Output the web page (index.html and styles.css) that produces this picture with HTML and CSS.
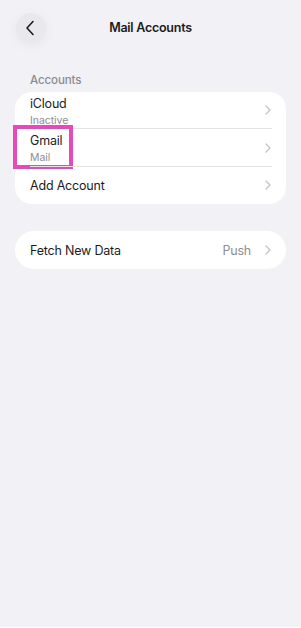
FILE: index.html
```html
<!DOCTYPE html>
<html>
<head>
<meta charset="utf-8">
<link rel="stylesheet" href="styles.css">
</head>
<body>
<div class="screen">
  <header class="nav">
    <button class="back" aria-label="Back">
      <svg width="10" height="16" viewBox="0 0 10 16"><path d="M8 1.5 L2 8 L8 14.5" fill="none" stroke="#1c1c1e" stroke-width="1.6" stroke-linecap="round" stroke-linejoin="round"/></svg>
    </button>
    <h1 class="title">Mail Accounts</h1>
  </header>

  <div class="section-label">Accounts</div>
  <div class="card">
    <div class="row two">
      <div class="texts"><div class="main">iCloud</div><div class="sub">Inactive</div></div>
      <span class="chev"><svg width="6" height="10" viewBox="0 0 6 10"><path d="M1 1 L5 5 L1 9" fill="none" stroke="#c4c4c8" stroke-width="1.3" stroke-linecap="round" stroke-linejoin="round"/></svg></span>
    </div>
    <div class="row two sel">
      <div class="texts"><div class="main">Gmail</div><div class="sub">Mail</div></div>
      <span class="chev"><svg width="6" height="10" viewBox="0 0 6 10"><path d="M1 1 L5 5 L1 9" fill="none" stroke="#c4c4c8" stroke-width="1.3" stroke-linecap="round" stroke-linejoin="round"/></svg></span>
      <span class="highlight"></span>
    </div>
    <div class="row one">
      <div class="texts"><div class="main">Add Account</div></div>
      <span class="chev"><svg width="6" height="10" viewBox="0 0 6 10"><path d="M1 1 L5 5 L1 9" fill="none" stroke="#c4c4c8" stroke-width="1.3" stroke-linecap="round" stroke-linejoin="round"/></svg></span>
    </div>
  </div>

  <div class="card pill">
    <div class="row one">
      <div class="texts"><div class="main">Fetch New Data</div></div>
      <span class="value">Push</span>
      <span class="chev"><svg width="6" height="10" viewBox="0 0 6 10"><path d="M1 1 L5 5 L1 9" fill="none" stroke="#c4c4c8" stroke-width="1.3" stroke-linecap="round" stroke-linejoin="round"/></svg></span>
    </div>
  </div>
</div>
</body>
</html>
```

FILE: styles.css
```css
html, body {
  margin: 0;
  padding: 0;
  background: #f2f1f6;
}
body {
  font-family: Inter, "Noto Sans", sans-serif;
  color: #1c1c1e;
  -webkit-font-smoothing: antialiased;
}
.screen {
  width: 301px;
  height: 627px;
  background: #f2f1f6;
  border-bottom: 1px solid #ffffff;
}
.nav {
  position: relative;
  height: 57px;
  display: flex;
  align-items: flex-start;
  justify-content: center;
}
.back {
  position: absolute;
  left: 16px;
  top: 13px;
  width: 30px;
  height: 30px;
  border-radius: 50%;
  border: none;
  padding: 0;
  background: #e9e8ed;
  box-shadow: 0 3px 12px rgba(0, 0, 0, 0.05);
  display: flex;
  align-items: center;
  justify-content: center;
}
.back svg { margin-left: -2px; }
.title {
  margin: 20px 0 0;
  font-size: 12.5px;
  line-height: 16px;
  font-weight: 600;
  letter-spacing: -0.25px;
}
.section-label {
  margin: 16px 0 0 30px;
  font-size: 11.5px;
  line-height: 15px;
  color: #8a8a8f;
  font-weight: 500;
  letter-spacing: -0.1px;
}
.card {
  margin: 4px 15px 0;
  background: #fff;
  border-radius: 17px;
}
.card.pill {
  margin-top: 27px;
  border-radius: 19px;
}
.row {
  position: relative;
  box-sizing: border-box;
  display: flex;
  align-items: center;
  padding: 2px 15px 0 15px;
  height: 38px;
}
.row + .row::before {
  content: "";
  position: absolute;
  top: 0;
  left: 15px;
  right: 14px;
  height: 1px;
  background: #e4e4e8;
}
.row.two { padding-top: 3px; }
.row.two:first-child { height: 36px; padding-top: 2px; }
.chev, .value { margin-top: -2px; }
.texts { flex: 1; }
.main {
  font-size: 12.5px;
  line-height: 16px;
  letter-spacing: -0.2px;
}
.sub {
  margin-top: 2px;
  font-size: 10.5px;
  line-height: 13px;
  color: #8e8e93;
  letter-spacing: -0.05px;
}
.value {
  font-size: 12.5px;
  letter-spacing: -0.2px;
  color: #8e8e93;
  margin-right: 14px;
}
.chev {
  display: flex;
  width: 6px;
  height: 10px;
}
.highlight {
  position: absolute;
  left: -2px;
  top: -3px;
  width: 60px;
  height: 44px;
  box-sizing: border-box;
  border: 4px solid #e64ab9;
  margin-top: 0;
}
```
